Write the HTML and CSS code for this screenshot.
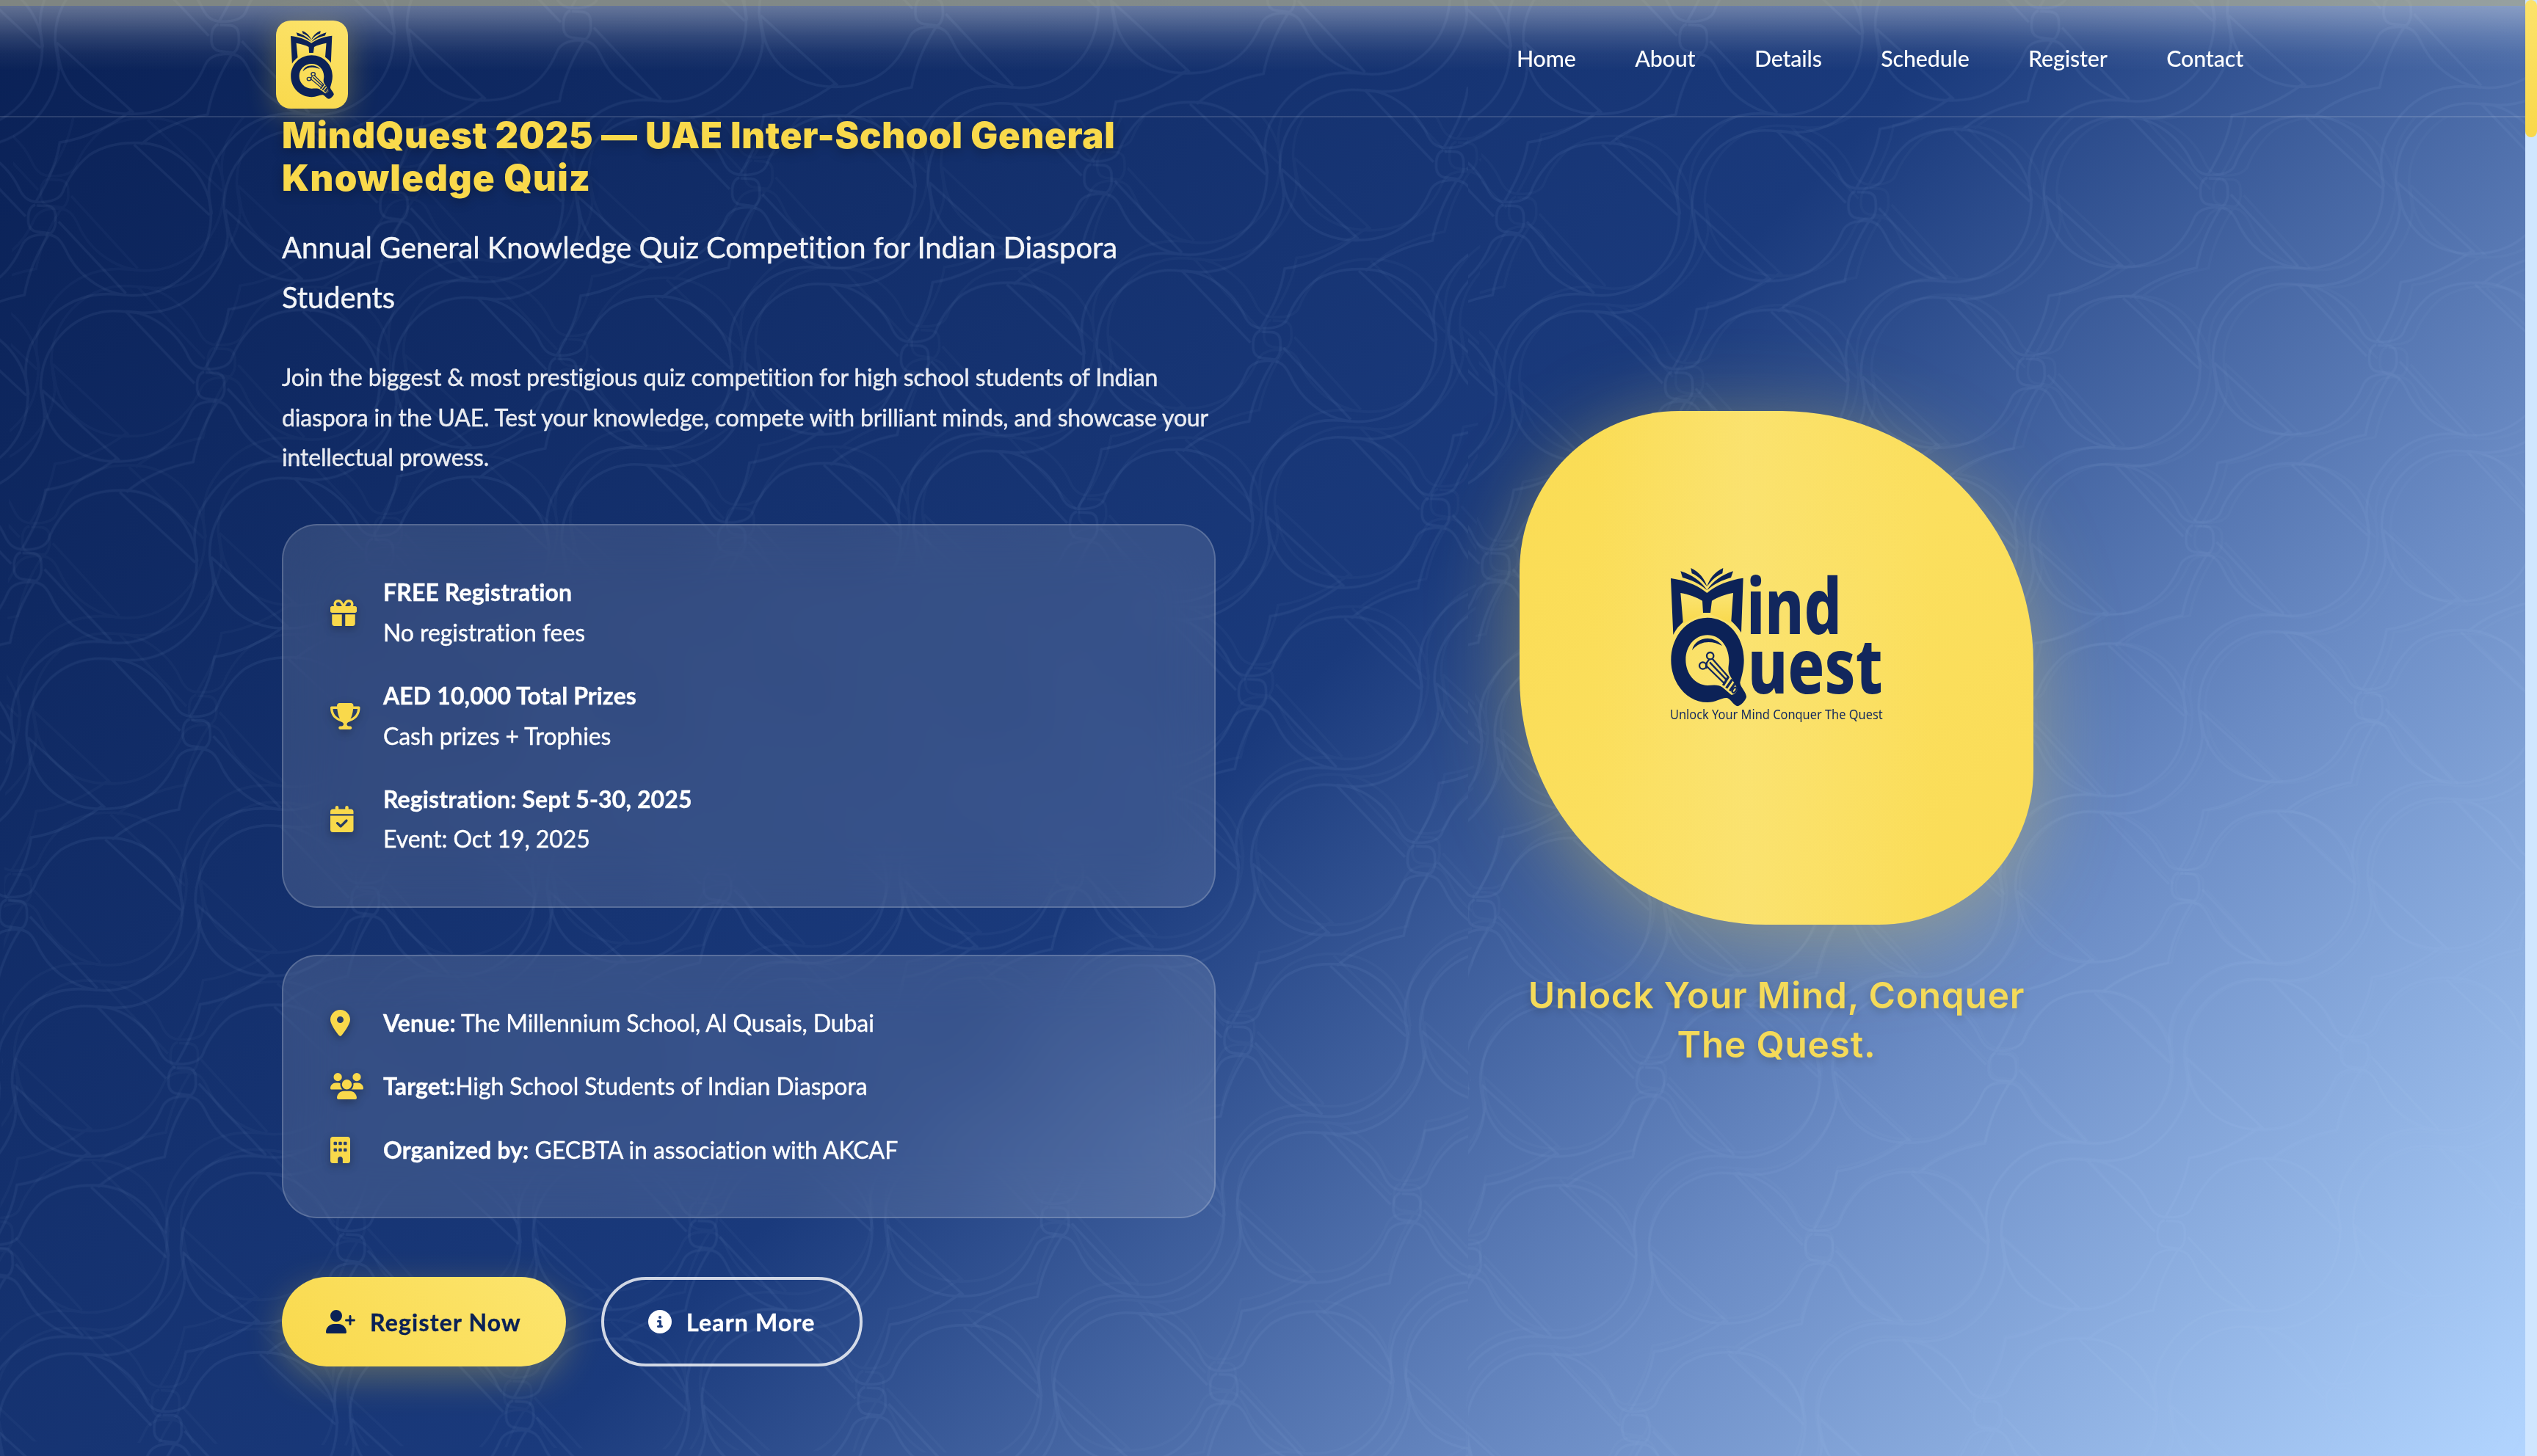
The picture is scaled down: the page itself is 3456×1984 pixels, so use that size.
FILE: index.html
```html
<!DOCTYPE html>
<html lang="en">
<head>
<meta charset="utf-8">
<title>MindQuest 2025</title>
<link rel="stylesheet" href="styles.css">
</head>
<body>
<svg class="defs" width="0" height="0" aria-hidden="true">
  <defs>
    <g id="motif" transform="scale(.3333)">
      <g transform="translate(-228 -900)">
        <path d="M205 846L250 848Q280 852 282 885L283 915Q280 945 262 960L205 953Q175 948 171 915L171 890Q174 850 200 843"/>
        <path d="M-120 597C-20 597 90 680 135 780C155 820 180 832 215 832C260 832 300 820 312 790C330 740 370 680 420 640C480 600 550 588 620 590C760 592 860 690 900 790C925 850 920 920 905 980C870 1110 750 1212 600 1214C500 1216 390 1150 335 1050C315 1010 300 968 250 965C200 962 160 975 145 1010C90 1140 -10 1210 -157 1210C-300 1210 -410 1130 -447 1010C-455 970 -462 950 -462 918"/>
        <path d="M570 1212C500 1205 300 1180 180 1420C150 1500 160 1560 172 1620"/>
        <path d="M985 980C975 1100 850 1285 640 1285C580 1282 540 1275 500 1278C350 1290 222 1420 222 1588C225 1640 240 1680 237 1718"/>
        <path d="M603 597L912 885M295 912L570 1205M-120 597L160 890M-462 918L-147 1205"/>
        <path d="M200 835C250 750 285 680 300 588C400 575 510 520 590 460M255 965C200 1050 170 1130 155 1212C55 1230 -50 1275 -118 1335"/>
      </g>
    </g>
    <g id="run2"><use href="#motif"/><use href="#motif" x="230" y="227.5"/></g>
    <g id="run4"><use href="#run2"/><use href="#run2" x="460" y="455"/></g>
    <g id="run8"><use href="#run4"/><use href="#run4" x="920" y="910"/></g>
    <g id="run12"><use href="#run8"/><use href="#run4" x="1840" y="1820"/></g>
    <g id="grid2"><use href="#run12"/><use href="#run12" x="-249.5" y="246"/></g>
    <g id="grid4"><use href="#grid2"/><use href="#grid2" x="-499" y="492"/></g>
    <g id="grid8"><use href="#grid4"/><use href="#grid4" x="-998" y="984"/></g>
    <g id="grid12"><use href="#grid8"/><use href="#grid4" x="-1996" y="1968"/></g>
    <clipPath id="sheet-clip"><rect width="2000" height="2000"/></clipPath>
    <g id="sheet" clip-path="url(#sheet-clip)"><use href="#grid12" x="1114" y="-2106.5"/></g>

    <linearGradient id="page-fill" x1="0" y1="0" x2="0" y2="1"><stop offset="0" stop-color="#fbe474"/><stop offset="1" stop-color="#f9d94b"/></linearGradient>
    <g id="emblem">
      <path fill="url(#page-fill)" d="M116 202L208 236L212 290L126 330ZM333 202L246 236L240 290L326 330Z"/>
      <path d="M78 144C130 150 190 172 226 204C262 172 320 150 374 143L366 366C354 348 340 332 325 319L333 204C300 210 268 222 246 236L240 285L210 285L207 236C184 222 152 210 118 204L128 323C112 338 98 354 88 375Z"/>
      <path d="M118 115C165 130 205 158 226 193C195 165 160 150 126 141ZM333 115C287 130 247 158 226 193C257 165 292 150 324 141ZM160 102C195 118 217 147 226 178C205 150 188 134 164 124ZM292 102C257 118 235 147 226 178C247 150 265 134 289 124Z"/>
      <path fill-rule="evenodd" d="M228 305C310 305 377 380 377 478C377 515 368 545 361 570C362 590 388 610 387 630C380 648 366 662 352 667C335 664 325 640 308 633C288 630 262 651 228 651C146 651 79 575 79 478C79 380 146 305 228 305ZM228 376C178 376 139 420 139 477C139 535 178 580 228 582C255 580 275 578 290 590L325 620C335 623 350 608 350 595L322 545C306 520 317 500 316 478C314 420 278 376 228 376Z"/>
      <path d="M165 438C178 382 255 374 288 420C250 400 200 395 165 438Z"/>
      <g fill="none" stroke="#12275d" stroke-width="7">
        <circle cx="239" cy="461" r="14"/><circle cx="209" cy="501" r="14"/>
        <path d="M235 475L222 493M248 473L314 548M222 501L296 573M237 487L306 560M222 513L225 490"/>
        <path stroke-width="10" d="M314 546L292 582M329 558L305 593M340 574L319 604"/>
        <ellipse cx="338" cy="601" rx="7" ry="12" transform="rotate(35 338 601)"/>
      </g>
    </g>
  </defs>
</svg>

<svg class="lines lines-page" width="3440" height="1984" aria-hidden="true"><use href="#sheet"/><use href="#sheet" x="2000"/></svg>
<div class="hero-lines"><svg class="lines lines-hero" width="3440" height="1984" aria-hidden="true"><g transform="rotate(.7 2960 1690)"><use href="#sheet"/><use href="#sheet" x="2000"/></g></svg></div>

<header class="header">
  <div class="header-inner">
    <a class="brand"><svg viewBox="78 102 310 566" preserveAspectRatio="none"><use href="#emblem"/></svg></a>
    <nav class="nav"><a>Home</a><a>About</a><a>Details</a><a>Schedule</a><a>Register</a><a>Contact</a></nav>
  </div>
</header>

<main class="hero">
  <section class="intro">
    <h1 class="title"><span class="title-a">MindQuest 2025 — UAE Inter-School General</span> <span class="title-b">Knowledge Quiz</span></h1>
    <p class="subtitle">Annual General Knowledge Quiz Competition for Indian Diaspora Students</p>
    <p class="lead">Join the biggest &amp; most prestigious quiz competition for high school students of Indian diaspora in the UAE. Test your knowledge, compete with brilliant minds, and showcase your intellectual prowess.</p>
    <ul class="card">
      <li><span class="icon"><svg viewBox="0 0 512 512"><path d="M190.500 68.800L225.300 128H224 152c-22.100 0-40-17.900-40-40s17.900-40 40-40h2.200c14.900 0 28.800 7.900 36.300 20.800zM64 88c0 14.400 3.500 28 9.600 40H32c-17.700 0-32 14.300-32 32v64c0 17.700 14.300 32 32 32H480c17.700 0 32-14.300 32-32V160c0-17.700-14.300-32-32-32H438.400c6.100-12 9.600-25.600 9.600-40c0-48.600-39.400-88-88-88h-2.200c-31.900 0-61.500 16.900-77.700 44.400L256 85.500l-24.100-41C215.700 16.900 186.100 0 154.200 0H152C103.400 0 64 39.400 64 88zm336 0c0 22.100-17.900 40-40 40H288h-1.300l34.800-59.200C329.100 55.900 342.900 48 357.800 48H360c22.100 0 40 17.900 40 40zM32 288V464c0 26.500 21.500 48 48 48H224V288H32zM288 512H432c26.500 0 48-21.500 48-48V288H288V512z"/></svg></span><span><b>FREE Registration</b><br>No registration fees</span></li>
      <li><span class="icon"><svg viewBox="0 0 576 512"><path d="M400 0H176c-26.500 0-48.100 21.800-47.100 48.200c.2 5.300 .4 10.600 .7 15.800H24C10.700 64 0 74.700 0 88c0 92.600 33.500 157 78.500 200.700c44.300 43.100 98.300 64.800 138.100 75.800c23.400 6.500 39.400 26 39.400 45.600c0 20.900-17 37.900-37.900 37.900H192c-17.700 0-32 14.300-32 32s14.300 32 32 32H384c17.700 0 32-14.300 32-32s-14.300-32-32-32H357.900C337 448 320 431 320 410.100c0-19.600 15.900-39.200 39.400-45.600c39.900-11 93.900-32.700 138.200-75.800C542.500 245 576 180.600 576 88c0-13.300-10.700-24-24-24H446.400c.3-5.200 .5-10.400 .7-15.800C448.100 21.800 426.500 0 400 0zM48.900 112h84.400c9.100 90.100 29.200 150.300 51.900 190.600c-24.900-11-50.800-26.500-73.200-48.300c-32-31.100-58-76-63-142.300zM464.100 254.300c-22.400 21.800-48.300 37.300-73.200 48.300c22.700-40.300 42.800-100.500 51.900-190.600h84.400c-5.100 66.300-31.100 111.200-63 142.300z"/></svg></span><span><b>AED 10,000 Total Prizes</b><br>Cash prizes + Trophies</span></li>
      <li><span class="icon"><svg viewBox="0 0 448 512"><path d="M128 0c17.700 0 32 14.300 32 32V64H288V32c0-17.700 14.300-32 32-32s32 14.300 32 32V64h48c26.500 0 48 21.500 48 48v48H0V112C0 85.500 21.500 64 48 64H96V32c0-17.700 14.300-32 32-32zM0 192H448V464c0 26.500-21.500 48-48 48H48c-26.500 0-48-21.500-48-48V192zM329 305c9.400-9.400 9.400-24.600 0-33.900s-24.600-9.400-33.900 0l-95 95-47-47c-9.400-9.400-24.600-9.400-33.900 0s-9.400 24.600 0 33.900l64 64c9.400 9.400 24.600 9.400 33.900 0L329 305z"/></svg></span><span><b>Registration: Sept 5-30, 2025</b><br>Event: Oct 19, 2025</span></li>
    </ul>
    <ul class="card">
      <li><span class="icon"><svg viewBox="0 0 384 512"><path d="M215.700 499.200C267 435 384 279.400 384 192C384 86 298 0 192 0S0 86 0 192c0 87.400 117 243 168.300 307.200c12.300 15.300 35.100 15.300 47.400 0zM192 128a64 64 0 1 1 0 128 64 64 0 1 1 0-128z"/></svg></span><span><b>Venue:</b> The Millennium School, Al Qusais, Dubai</span></li>
      <li><span class="icon"><svg viewBox="0 0 640 512"><path d="M144 0a80 80 0 1 1 0 160A80 80 0 1 1 144 0zM512 0a80 80 0 1 1 0 160A80 80 0 1 1 512 0zM0 298.700C0 239.800 47.800 192 106.700 192h42.700c15.900 0 31 3.500 44.600 9.700c-1.300 7.200-1.900 14.700-1.900 22.300c0 38.200 16.800 72.500 43.300 96H21.300C9.600 320 0 310.400 0 298.700zM404.600 320c26.600-23.500 43.300-57.800 43.300-96c0-7.600-.7-15-1.900-22.300c13.600-6.300 28.700-9.700 44.600-9.700h42.700C592.200 192 640 239.800 640 298.700c0 11.800-9.600 21.300-21.300 21.300H404.600zM224 224a96 96 0 1 1 192 0 96 96 0 1 1 -192 0zM128 485.300C128 411.700 187.700 352 261.300 352H378.700C452.300 352 512 411.700 512 485.300c0 14.700-11.900 26.700-26.700 26.700H154.700c-14.700 0-26.700-11.900-26.700-26.700z"/></svg></span><span><b>Target:</b>High School Students of Indian Diaspora</span></li>
      <li><span class="icon"><svg viewBox="0 0 384 512"><path fill-rule="evenodd" d="M48 0C21.500 0 0 21.500 0 48V464c0 26.500 21.500 48 48 48h96V432c0-26.500 21.500-48 48-48s48 21.500 48 48v80h96c26.500 0 48-21.500 48-48V48c0-26.500-21.500-48-48-48H48zM80 96h32q16 0 16 16v32q0 16-16 16H80q-16 0-16-16V112q0-16 16-16zM176 96h32q16 0 16 16v32q0 16-16 16H176q-16 0-16-16V112q0-16 16-16zM272 96h32q16 0 16 16v32q0 16-16 16H272q-16 0-16-16V112q0-16 16-16zM80 224h32q16 0 16 16v32q0 16-16 16H80q-16 0-16-16V240q0-16 16-16zM176 224h32q16 0 16 16v32q0 16-16 16H176q-16 0-16-16V240q0-16 16-16zM272 224h32q16 0 16 16v32q0 16-16 16H272q-16 0-16-16V240q0-16 16-16z"/></svg></span><span><b>Organized by:</b> GECBTA in association with AKCAF</span></li>
    </ul>
    <div class="actions">
      <a class="button button-primary"><svg viewBox="0 0 640 512"><path d="M96 128a128 128 0 1 1 256 0A128 128 0 1 1 96 128zM0 482.300C0 383.800 79.800 304 178.300 304h91.400C368.200 304 448 383.800 448 482.300c0 16.400-13.300 29.700-29.700 29.700H29.700C13.300 512 0 498.700 0 482.300zM504 312V248H440c-13.300 0-24-10.700-24-24s10.700-24 24-24h64V136c0-13.300 10.700-24 24-24s24 10.700 24 24v64h64c13.300 0 24 10.700 24 24s-10.700 24-24 24H552v64c0 13.300-10.700 24-24 24s-24-10.700-24-24z"/></svg>Register Now</a>
      <a class="button button-outline"><svg viewBox="0 0 512 512"><path d="M256 512A256 256 0 1 0 256 0a256 256 0 1 0 0 512zM216 336h24V272H216c-13.300 0-24-10.700-24-24s10.700-24 24-24h48c13.300 0 24 10.700 24 24v88h8c13.300 0 24 10.700 24 24s-10.700 24-24 24H216c-13.300 0-24-10.700-24-24s10.700-24 24-24zm40-208a32 32 0 1 1 0 64 32 32 0 1 1 0-64z"/></svg>Learn More</a>
    </div>
  </section>
  <section class="visual">
    <div class="blob">
      <svg class="wordmark" viewBox="0 0 1020 810">
        <use href="#emblem"/>
        <text x="388" y="371" class="word" font-size="318" textLength="388" lengthAdjust="spacingAndGlyphs">ind</text>
        <text x="392" y="616" class="word" font-size="308" textLength="552" lengthAdjust="spacingAndGlyphs">uest</text>
        <text x="75" y="720" class="motto" font-size="52" textLength="869" lengthAdjust="spacingAndGlyphs">Unlock Your Mind Conquer The Quest</text>
      </svg>
    </div>
    <p class="tagline"><span class="tag-a">Unlock Your Mind, Conquer</span> <span class="tag-b">The Quest.</span></p>
  </section>
</main>
<div class="scrollbar"><div class="thumb"></div></div>
</body>
</html>
```
FILE: styles.css
```css
* { box-sizing: border-box; margin: 0; padding: 0; }
body {
  width: 3456px;
  height: 1984px;
  overflow: hidden;
  display: grid;
  grid-template: 1984px / 3440px 16px;
  background: #d0e6ff;
  color: #fff;
  font-family: Lato, "Liberation Sans", sans-serif;
  font-variant-ligatures: none;
}
.defs { position: absolute; }
.lines-page {
  grid-area: 1 / 1;
  background: linear-gradient(135deg, #0a2156 0%, #1a3a7c 50%, #6b8cc5 75%, #b2d5ff 100%);
}
.lines { fill: none; stroke: #b4d4ff; stroke-width: 11; display: block; }
.lines-page use { opacity: .07; }
.hero-lines { grid-area: 1 / 1; height: 1824px; align-self: end; overflow: hidden; }
.lines-hero { margin-top: -160px; opacity: .032; }

.header {
  grid-area: 1 / 1;
  align-self: start;
  z-index: 2;
  height: 160px;
  border-top: 8px solid rgba(205, 200, 159, .6);
  border-bottom: 2px solid rgba(255, 255, 255, .13);
  background: linear-gradient(rgba(255, 255, 255, .36), rgba(255, 255, 255, .28) 16px, rgba(255, 255, 255, .15) 40px, rgba(255, 255, 255, .05) 64px, rgba(255, 255, 255, 0) 90px) no-repeat padding-box;
}
.header-inner {
  width: 2688px;
  margin-left: 376px;
  padding: 20px 8px 0 0;
  display: flex;
  justify-content: space-between;
  align-items: flex-start;
}
.brand {
  width: 98px;
  height: 120px;
  border-radius: 20px;
  padding: 14px 19px 13px 20px;
  background: linear-gradient(200deg, #fce36b, #f9d94c);
  box-shadow: 0 8px 40px rgba(250, 217, 76, .32);
}
.brand svg { display: block; width: 59px; height: 93px; }
#emblem { fill: #0c2257; }
.nav { display: flex; gap: 80.5px; padding-top: 25px; font-size: 30.4px; line-height: 52px; font-weight: 500; letter-spacing: -.15px; }

.hero {
  grid-area: 1 / 1;
  z-index: 1;
  display: grid;
  grid-template-columns: 1272px 1272px;
  gap: 128px;
  padding: 156px 384px 0;
}
.title {
  font: 900 49px/57.6px Inter, sans-serif;
  color: #f9d94b;
  text-shadow: 0 4px 16px rgba(0, 0, 0, .3);
  white-space: nowrap;
}
.title span, .tagline span { display: block; }
.title-a { letter-spacing: .75px; }
.title-b { letter-spacing: 1.3px; }
.subtitle { margin-top: 32px; font-size: 40px; line-height: 68px; letter-spacing: -.07px; color: rgba(255, 255, 255, .95); -webkit-text-stroke: .4px; }
.lead { margin-top: 48px; font-size: 32px; line-height: 54.4px; letter-spacing: -.17px; color: rgba(255, 255, 255, .9); -webkit-text-stroke: .4px; }
.card {
  list-style: none;
  margin-top: 64px;
  padding: 64px;
  border: 2px solid rgba(255, 255, 255, .18);
  border-radius: 48px;
  background: rgba(255, 255, 255, .13);
  backdrop-filter: blur(40px);
  display: flex;
  flex-direction: column;
  gap: 32px;
  font-size: 32px;
  line-height: 54.4px;
  letter-spacing: -.08px;
  -webkit-text-stroke: .4px;
}
.card b { letter-spacing: .12px; }
.card li { display: flex; align-items: center; gap: 24px; }
.icon { width: 48px; height: 36px; }
.icon svg { display: block; height: 36px; fill: #f9d94b; overflow: visible; filter: drop-shadow(0 4px 6px rgba(0, 0, 0, .3)); }
.actions { margin-top: 80px; display: flex; gap: 48px; }
.button {
  height: 122px;
  border-radius: 61px;
  display: flex;
  align-items: center;
  gap: 20px;
  font-size: 32px;
  font-weight: 700;
  letter-spacing: 1.2px;
  white-space: nowrap;
  -webkit-text-stroke: .4px;
}
.button svg { height: 32px; }
.button-primary {
  width: 387px;
  padding-left: 60px;
  color: #0a2156;
  fill: #0a2156;
  background: linear-gradient(45deg, #f9d94c, #fce56f);
  box-shadow: 0 16px 50px rgba(250, 217, 76, .3);
}
.button-outline { width: 356px; padding-left: 60px; border: 4px solid rgba(255, 255, 255, .8); fill: #fff; }

.visual { display: flex; flex-direction: column; align-items: center; padding-top: 404px; }
.blob {
  width: 700px;
  height: 700px;
  border-radius: 31% 49% 30% 48%;
  background: linear-gradient(90deg, rgba(250, 222, 94, 0) 15%, rgba(250, 228, 120, .7) 44%, rgba(250, 222, 94, 0) 80%), linear-gradient(135deg, #fadc54, #fbdf5e 50%, #fadc56);
  box-shadow: 0 20px 120px rgba(250, 217, 76, .36);
  display: flex;
  justify-content: center;
  padding-top: 180px;
}
.wordmark { width: 340px; height: 270px; fill: #12275d; overflow: visible; }
.word { font-family: "Noto Sans", sans-serif; font-weight: 800; }
.motto { font-family: "Noto Sans", sans-serif; }
.tagline {
  margin-top: 63px;
  text-align: center;
  font: 600 49.5px/67.2px Inter, sans-serif;
  color: #f4da59;
  text-shadow: 0 4px 12px rgba(0, 0, 0, .2);
  white-space: nowrap;
  letter-spacing: .8px;
}
.scrollbar { grid-area: 1 / 2; }
.thumb { height: 187px; border-radius: 8px; background: linear-gradient(#fce36b, #f9d84a); }
```
